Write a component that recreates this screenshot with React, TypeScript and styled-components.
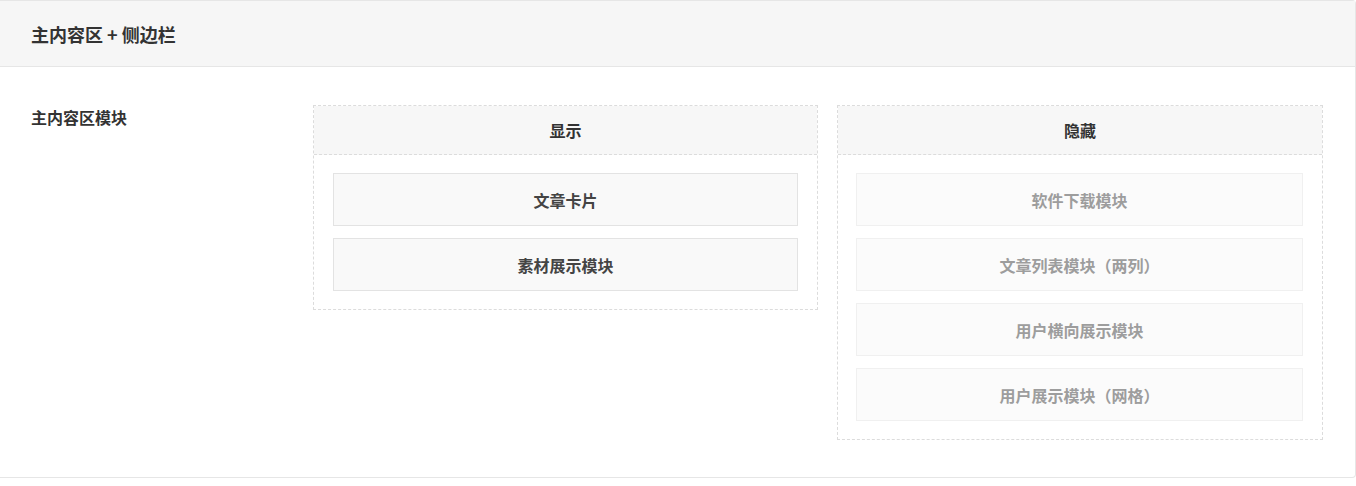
import React from "react";
import styled, { createGlobalStyle } from "styled-components";

const Global = createGlobalStyle`
  html, body { margin: 0; padding: 0; background: #fff; }
  body { font-family: "Noto Sans CJK SC", "Noto Sans", sans-serif; color: #333; }
  * { box-sizing: border-box; }
`;

const Panel = styled.section`
  width: 1356px;
  border: 1px solid #e6e6e6;
  border-left: none;
  border-radius: 0 4px 4px 0;
  background: #fff;
`;

const PanelHeader = styled.header`
  height: 66px;
  background: #f6f6f6;
  border-bottom: 1px solid #e6e6e6;
  display: flex;
  align-items: center;
  padding-left: 31px;
  font-size: 18px;
  font-weight: 700;
  color: #333;
`;

const PanelBody = styled.div`
  display: flex;
  padding: 38px 33px 37px 31px;
`;

const Label = styled.div`
  width: 282px;
  flex: none;
  font-size: 16px;
  font-weight: 700;
  color: #333;
  line-height: 24px;
`;

const Columns = styled.div`
  display: flex;
  align-items: flex-start;
  gap: 19px;
`;

const Column = styled.div<{ $w: number }>`
  width: ${(p) => p.$w}px;
  border: 1px dashed #dcdcdc;
`;

const ColumnHead = styled.div`
  height: 49px;
  background: #f7f7f7;
  border-bottom: 1px dashed #dcdcdc;
  display: flex;
  align-items: center;
  justify-content: center;
  font-size: 16px;
  font-weight: 700;
  color: #333;
`;

const ColumnBody = styled.div`
  display: flex;
  flex-direction: column;
  gap: 12px;
  padding: 18px 19px 18px 18px;
`;

const Item = styled.div<{ $muted?: boolean }>`
  height: 53px;
  display: flex;
  align-items: center;
  justify-content: center;
  font-size: 16px;
  font-weight: 700;
  background: ${(p) => (p.$muted ? "#fbfbfb" : "#f9f9f9")};
  border: 1px solid ${(p) => (p.$muted ? "#f0f0f0" : "#e3e3e3")};
  color: ${(p) => (p.$muted ? "#9d9d9d" : "#444")};
`;

const ShownBody = styled(ColumnBody)`
  padding-left: 19px;
`;

const shown = ["文章卡片", "素材展示模块"];
const hidden = ["软件下载模块", "文章列表模块（两列）", "用户横向展示模块", "用户展示模块（网格）"];

export default function App() {
  return (
    <>
      <Global />
      <Panel>
        <PanelHeader>主内容区 + 侧边栏</PanelHeader>
        <PanelBody>
          <Label>主内容区模块</Label>
          <Columns>
            <Column $w={505}>
              <ColumnHead>显示</ColumnHead>
              <ShownBody>
                {shown.map((t) => (
                  <Item key={t}>{t}</Item>
                ))}
              </ShownBody>
            </Column>
            <Column $w={486}>
              <ColumnHead>隐藏</ColumnHead>
              <ColumnBody>
                {hidden.map((t) => (
                  <Item key={t} $muted>
                    {t}
                  </Item>
                ))}
              </ColumnBody>
            </Column>
          </Columns>
        </PanelBody>
      </Panel>
    </>
  );
}
